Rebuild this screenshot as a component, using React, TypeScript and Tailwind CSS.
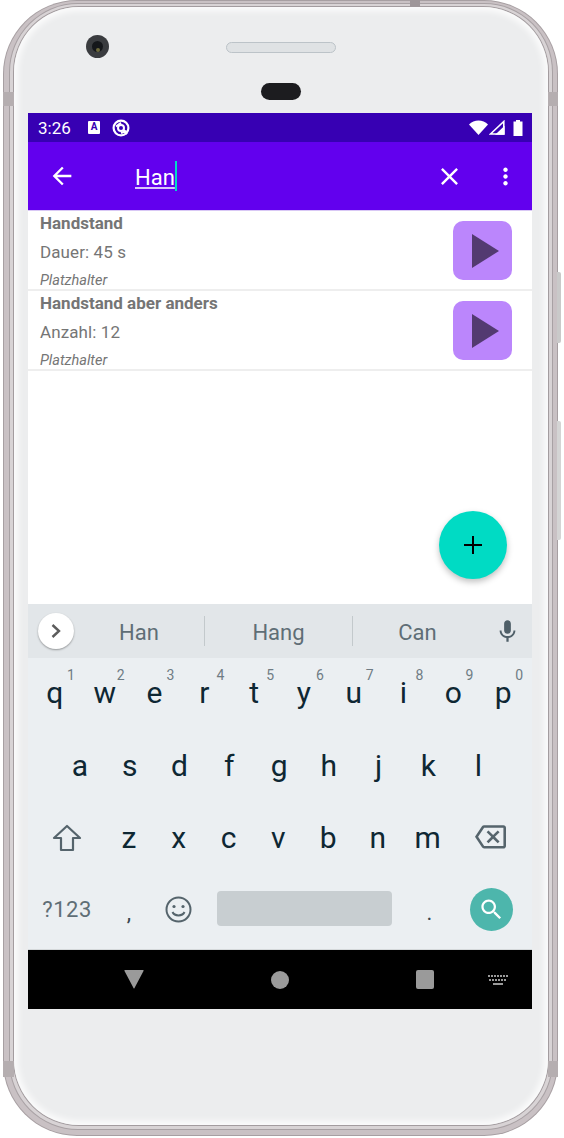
import React from 'react';

const row1 = [
    ['q', '1'], ['w', '2'], ['e', '3'], ['r', '4'], ['t', '5'],
    ['y', '6'], ['u', '7'], ['i', '8'], ['o', '9'], ['p', '0'],
];
const row2 = ['a', 's', 'd', 'f', 'g', 'h', 'j', 'k', 'l'];
const row3 = ['z', 'x', 'c', 'v', 'b', 'n', 'm'];

const exercises = [
    { name: 'Handstand', detail: 'Dauer: 45 s' },
    { name: 'Handstand aber anders', detail: 'Anzahl: 12' },
];

const Key: React.FC<{ label: string; hint?: string }> = ({ label, hint }) => (
    <div className="relative w-[49.8px] flex justify-center text-[30px] leading-[36px] text-[#0e2733]">
        {label}
        {hint && <span className="absolute left-[37px] top-[-8px] text-[14px] leading-[16px] text-[#6f7c84]">{hint}</span>}
    </div>
);

const StatusBar = () => (
    <div className="h-[29px] bg-[#3700b3] flex items-center pl-[10px] pr-[9px] text-white">
        <span className="text-[17px] leading-[20px] w-[50px]">3:26</span>
        <div className="w-[12px] h-[13px] bg-white rounded-[1px] flex justify-center text-[10px] leading-[12px] font-bold text-[#3700b3]">A</div>
        <svg className="ml-[12px]" width="18" height="18" viewBox="0 0 18 18" fill="none" stroke="white">
            <circle cx="9" cy="9" r="7.4" strokeWidth="2.2" />
            <circle cx="9" cy="9" r="3" strokeWidth="2" />
            <path d="M4 7.5 L9 3.8 M9 14 L14.5 12 M11.5 11 L15 15" strokeWidth="2" />
        </svg>
        <div className="flex-1" />
        <svg width="19" height="15" viewBox="0 0 19 15" fill="white"><path d="M0 4.5 C5 -1 14 -1 19 4.5 L9.5 15 Z" /></svg>
        <svg className="ml-[1px]" width="16" height="15" viewBox="0 0 16 15" fill="none" stroke="white" strokeWidth="1.6">
            <path d="M1.5 14 L14.8 1.5 V14 Z" />
            <path d="M8 14 L14.8 7.5 V14 Z" fill="white" />
        </svg>
        <svg className="ml-[8px]" width="10" height="16" viewBox="0 0 10 16" fill="white"><path d="M3 0 H7 V1.5 H9.5 V16 H0.5 V1.5 H3 Z" /></svg>
    </div>
);

const AppBar = () => (
    <div className="h-[69px] bg-[#6200ee] flex items-center text-white border-b border-[#d9c8f5]">
        <svg className="ml-[20px]" width="28" height="28" viewBox="0 0 24 24" fill="white">
            <path d="M20 11H7.83l5.59-5.59L12 4l-8 8 8 8 1.41-1.41L7.83 13H20v-2z" />
        </svg>
        <div className="ml-[59px] h-[30px] flex items-start">
            <span className="text-[22px] leading-[34px] underline decoration-[#d8c4fa] underline-offset-[2px]">Han</span>
            <div className="w-[2.5px] h-[30px] bg-[#03dac5]" />
        </div>
        <div className="flex-1" />
        <svg width="29" height="29" viewBox="0 0 24 24" fill="white">
            <path d="M19 6.41L17.59 5 12 10.59 6.41 5 5 6.41 10.59 12 5 17.59 6.41 19 12 13.41 17.59 19 19 17.59 13.41 12z" />
        </svg>
        <svg className="ml-[28px] mr-[13px]" width="27" height="27" viewBox="0 0 24 24" fill="white">
            <path d="M12 8c1.1 0 2-.9 2-2s-.9-2-2-2-2 .9-2 2 .9 2 2 2zm0 2c-1.1 0-2 .9-2 2s.9 2 2 2 2-.9 2-2-.9-2-2-2zm0 6c-1.1 0-2 .9-2 2s.9 2 2 2 2-.9 2-2-.9-2-2-2z" />
        </svg>
    </div>
);

const ExerciseRow: React.FC<{ name: string; detail: string }> = ({ name, detail }) => (
    <div className="h-[80px] flex items-start bg-white border-b-2 border-[#eeeeee] pl-[12px] pr-[20px] text-[#757575]">
        <div className="flex-1">
            <div className="text-[17px] leading-[24px] font-bold h-[26px]">{name}</div>
            <div className="text-[17px] leading-[24px] tracking-[0.1px] mt-[3px]">{detail}</div>
            <div className="text-[14.5px] leading-[18px] italic mt-[8px]">Platzhalter</div>
        </div>
        <div className="mt-[10px] w-[59px] h-[59px] rounded-[10px] bg-[#bb86fc] flex items-center justify-center">
            <svg className="ml-[7px]" width="28" height="34" viewBox="0 0 28 34" fill="#533a71"><path d="M0 0 L27 17 L0 34 Z" /></svg>
        </div>
    </div>
);

const Keyboard = () => (
    <div className="bg-[#ebeff2]">
        <div className="h-[54px] bg-[#e2e6e9] flex items-center text-[22px] text-[#5f6e76]">
            <div className="ml-[10px] w-[36px] h-[36px] rounded-full bg-white shadow-[0_1px_2px_rgba(0,0,0,0.35)] flex items-center justify-center">
                <svg width="14" height="16" viewBox="0 0 14 16" fill="none" stroke="#5c5c5c" strokeWidth="2.4"><path d="M3.5 2 L10 8 L3.5 14" /></svg>
            </div>
            <div className="w-[130px] text-center pt-[3px]">Han</div>
            <div className="w-px h-[30px] bg-[#c3c9cc]" />
            <div className="w-[147px] text-center pt-[3px]">Hang</div>
            <div className="w-px h-[30px] bg-[#c3c9cc]" />
            <div className="w-[129px] text-center pt-[3px]">Can</div>
            <svg className="ml-[12px]" width="27" height="27" viewBox="0 0 24 24" fill="#4f5f68">
                <path d="M12 14c1.66 0 2.99-1.34 2.99-3L15 5c0-1.66-1.34-3-3-3S9 3.34 9 5v6c0 1.66 1.34 3 3 3zm5.3-3c0 3-2.54 5.1-5.3 5.1S6.7 14 6.7 11H5c0 3.41 2.72 6.23 6 6.72V21h2v-3.28c3.28-.48 6-3.3 6-6.72h-1.7z" />
            </svg>
        </div>

        <div className="h-[291px] flex flex-col">
            <div className="h-[73px] flex items-center pl-[2px] pb-[4px]">
                {row1.map(([label, hint]) => <Key key={label} label={label} hint={hint} />)}
            </div>
            <div className="h-[73px] flex items-center pl-[27px] pb-[4px]">
                {row2.map(label => <Key key={label} label={label} />)}
            </div>
            <div className="h-[73px] flex items-center pb-[6px]">
                <div className="w-[76px] flex justify-center pr-[1px] pl-[2px]">
                    <svg width="30" height="28" viewBox="0 0 30 28" fill="none" stroke="#55646c" strokeWidth="2.2" strokeLinejoin="round">
                        <path d="M15 2 L28 14 H21 V26 H9 V14 H2 Z" />
                    </svg>
                </div>
                {row3.map(label => <Key key={label} label={label} />)}
                <div className="flex-1 flex justify-center pr-[3px]">
                    <svg width="31" height="25" viewBox="0 0 24 19" fill="#55646c">
                        <path d="M22 0H7c-.69 0-1.23.35-1.59.88L0 9l5.41 8.11c.36.53.9.89 1.59.89h15c1.1 0 2-.9 2-2V2c0-1.1-.9-2-2-2zm0 16H7.07L2.4 9l4.66-7H22v14zm-11.59-2L14 10.41 17.59 14 19 12.59 15.41 9 19 5.41 17.59 4 14 7.59 10.41 4 9 5.41 12.59 9 9 12.59z" />
                    </svg>
                </div>
            </div>
            <div className="h-[72px] flex items-center pb-[8px] text-[#5f6e76]">
                <div className="w-[78px] text-center text-[22px] tracking-[0.5px]">?123</div>
                <div className="w-[46px] text-center text-[22px] text-[#37474f] pt-[6px]">,</div>
                <div className="w-[53px] flex justify-center">
                    <svg width="27" height="27" viewBox="0 0 27 27" fill="none" stroke="#55646c" strokeWidth="2">
                        <circle cx="13.5" cy="13.5" r="12" />
                        <circle cx="9" cy="10.5" r="1.6" fill="#55646c" stroke="none" />
                        <circle cx="18" cy="10.5" r="1.6" fill="#55646c" stroke="none" />
                        <path d="M7.5 16 C9.5 20.5 17.5 20.5 19.5 16" />
                    </svg>
                </div>
                <div className="ml-[12px] mb-[1px] w-[175px] h-[35px] rounded-[4px] bg-[#c8ced1]" />
                <div className="w-[75px] text-center text-[22px] text-[#37474f] pt-[6px]">.</div>
                <div className="ml-[3px] w-[43px] h-[43px] rounded-full bg-[#4db6ac] flex items-center justify-center">
                    <svg width="27" height="27" viewBox="0 0 24 24" fill="white">
                        <path d="M15.5 14h-.79l-.28-.27C15.41 12.59 16 11.11 16 9.5 16 5.91 13.09 3 9.5 3S3 5.91 3 9.5 5.91 16 9.5 16c1.61 0 3.09-.59 4.23-1.57l.27.28v.79l5 4.99L20.49 19l-4.99-5zm-6 0C7.01 14 5 11.99 5 9.5S7.01 5 9.5 5 14 7.01 14 9.5 11.99 14 9.5 14z" />
                    </svg>
                </div>
            </div>
        </div>
        <div className="h-px bg-[#d4d8da]" />
    </div>
);

const NavBar = () => (
    <div className="h-[59px] bg-black flex items-center">
        <svg className="ml-[96px]" width="20" height="19" viewBox="0 0 20 19" fill="#9a9a9a"><path d="M1 0 H19 Q20 0 19.5 1 L10.5 18 Q10 19 9.5 18 L0.5 1 Q0 0 1 0 Z" /></svg>
        <div className="ml-[127px] w-[18px] h-[18px] rounded-full bg-[#9a9a9a]" />
        <div className="ml-[127px] w-[18px] h-[19px] rounded-[2px] bg-[#9a9a9a]" />
        <svg className="ml-[54px] mt-[2px]" width="21" height="12" viewBox="0 0 21 12" fill="#9a9a9a">
            <path d="M0 0h2v2H0zM3 0h2v2H3zM6 0h2v2H6zM9 0h2v2H9zM12 0h2v2h-2zM15 0h2v2h-2zM18 0h2v2h-2zM1 4h2v2H1zM4 4h2v2H4zM7 4h2v2H7zM10 4h2v2h-2zM13 4h2v2h-2zM16 4h2v2h-2zM5 8h10v2H5z" />
        </svg>
    </div>
);

export default function App() {
    return (
        <div className="w-[564px] h-[1138px] bg-white pl-[3px]" style={{ fontFamily: 'Roboto, sans-serif' }}>
            <div className="relative w-[555px] h-[1136px] rounded-[74px] bg-[#a79fa2] p-px">
                {/* side buttons and antenna bands lie over the frame */}
                <div className="absolute right-[-3px] top-[272px] w-[4px] h-[71px] rounded-r-[2px] bg-[#c9c9c9]" />
                <div className="absolute right-[-3px] top-[421px] w-[4px] h-[119px] rounded-r-[2px] bg-[#d4d4d4]" />
                <div className="absolute left-[407px] top-0 w-[10px] h-[7px] bg-[#9e9699]" />
                <div className="absolute left-0 top-[92px] w-[11px] h-[14px] bg-[#b5aeb0]" />
                <div className="absolute right-0 top-[92px] w-[10px] h-[14px] bg-[#b5aeb0]" />
                <div className="absolute left-0 top-[1061px] w-[11px] h-[16px] bg-[#b5aeb0]" />
                <div className="absolute right-0 top-[1061px] w-[10px] h-[16px] bg-[#b5aeb0]" />
                <div className="h-full rounded-[73px] bg-[#c9c1c4] pt-[2px] pb-[5px] pl-[5px] pr-[4px]">
                    <div className="h-full rounded-[69px] bg-[#a8a1a4] p-px">
                        <div className="h-full rounded-[68px] bg-[#d8d3d5] pt-[2px] pb-[3px] px-[3px]">
                            <div className="h-full rounded-[66px] bg-[#a39c9f] p-px">
                                <div className="h-full rounded-[65px] bg-[#ecedee] shadow-[inset_0_0_6px_4px_rgba(255,255,255,0.8)] pl-[14px] pr-[16px] pt-[106px]">
                                    <div className="relative h-[896px] flex flex-col">
                                        <StatusBar />
                                        <AppBar />
                                        <div className="h-[393px] bg-white flex flex-col">
                                            {exercises.map(item => <ExerciseRow key={item.name} {...item} />)}
                                        </div>
                                        <Keyboard />
                                        <NavBar />
                                        {/* floating action button */}
                                        <div className="absolute left-[411px] top-[398px] w-[68px] h-[68px] rounded-full bg-[#00dbc4] shadow-[0_3px_6px_rgba(0,0,0,0.25)] flex items-center justify-center">
                                            <svg width="18" height="18" viewBox="0 0 18 18" fill="black"><path d="M8 0h2v8h8v2h-8v8H8v-8H0V8h8z" /></svg>
                                        </div>
                                        {/* camera, speaker and sensor sit on the bezel above the screen */}
                                        <div className="absolute left-[58px] top-[-78px] w-[23px] h-[23px] rounded-full bg-[#3a3c3f] flex items-center justify-center">
                                            <div className="w-[11px] h-[11px] rounded-full bg-[#15171a] flex items-end justify-center">
                                                <div className="w-[4px] h-[4px] rounded-full bg-[#6d6a3c]" />
                                            </div>
                                        </div>
                                        <div className="absolute left-[198px] top-[-71px] w-[110px] h-[11px] rounded-full bg-[#dfe2e4] border border-[#bcc3c8]" />
                                        <div className="absolute left-[233px] top-[-30px] w-[40px] h-[17px] rounded-full bg-[#1c1c1f]" />
                                    </div>
                                </div>
                            </div>
                        </div>
                    </div>
                </div>
            </div>
        </div>
    );
}
